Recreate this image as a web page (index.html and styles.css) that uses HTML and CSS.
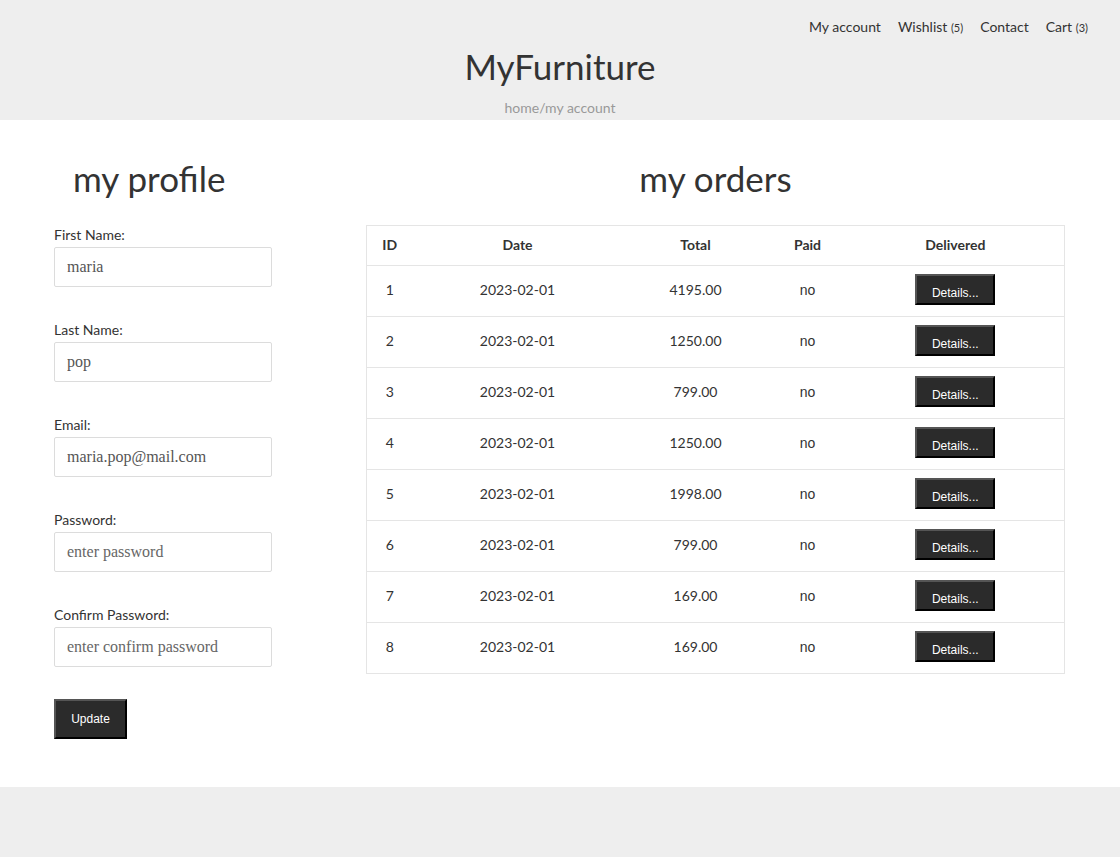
FILE: index.html
```html
<!DOCTYPE html>
<html>
<head>
<meta charset="utf-8">
<title>MyFurniture - my account</title>
<link rel="stylesheet" href="styles.css">
</head>
<body>
<header class="site-header">
  <nav class="top-nav">
    <a href="#">My account</a>
    <a href="#">Wishlist <small>(5)</small></a>
    <a href="#">Contact</a>
    <a href="#">Cart <small>(3)</small></a>
  </nav>
  <h1 class="brand">MyFurniture</h1>
  <div class="breadcrumb">home/my account</div>
</header>
<main class="content">
  <section class="profile">
    <h2 class="profile-title">my profile</h2>
    <form class="profile-form">
      <div class="field">
        <label>First Name:</label>
        <input type="text" value="maria">
      </div>
      <div class="field">
        <label>Last Name:</label>
        <input type="text" value="pop">
      </div>
      <div class="field">
        <label>Email:</label>
        <input type="text" value="maria.pop@mail.com">
      </div>
      <div class="field">
        <label>Password:</label>
        <input type="password" placeholder="enter password">
      </div>
      <div class="field">
        <label>Confirm Password:</label>
        <input type="password" placeholder="enter confirm password">
      </div>
      <button type="button" class="btn-dark btn-update">Update</button>
    </form>
  </section>
  <section class="orders">
    <h2 class="orders-title">my orders</h2>
    <table class="orders-table">
      <thead>
        <tr><th class="c-id">ID</th><th class="c-date">Date</th><th class="c-total">Total</th><th class="c-paid">Paid</th><th class="c-del">Delivered</th></tr>
      </thead>
      <tbody>
        <tr><td>1</td><td>2023-02-01</td><td>4195.00</td><td class="paid">no</td><td><button class="btn-dark btn-details">Details...</button></td></tr>
        <tr><td>2</td><td>2023-02-01</td><td>1250.00</td><td class="paid">no</td><td><button class="btn-dark btn-details">Details...</button></td></tr>
        <tr><td>3</td><td>2023-02-01</td><td>799.00</td><td class="paid">no</td><td><button class="btn-dark btn-details">Details...</button></td></tr>
        <tr><td>4</td><td>2023-02-01</td><td>1250.00</td><td class="paid">no</td><td><button class="btn-dark btn-details">Details...</button></td></tr>
        <tr><td>5</td><td>2023-02-01</td><td>1998.00</td><td class="paid">no</td><td><button class="btn-dark btn-details">Details...</button></td></tr>
        <tr><td>6</td><td>2023-02-01</td><td>799.00</td><td class="paid">no</td><td><button class="btn-dark btn-details">Details...</button></td></tr>
        <tr><td>7</td><td>2023-02-01</td><td>169.00</td><td class="paid">no</td><td><button class="btn-dark btn-details">Details...</button></td></tr>
        <tr><td>8</td><td>2023-02-01</td><td>169.00</td><td class="paid">no</td><td><button class="btn-dark btn-details">Details...</button></td></tr>
      </tbody>
    </table>
  </section>
</main>
<footer class="site-footer"></footer>
</body>
</html>
```
FILE: styles.css
```css
* { box-sizing: border-box; }
html, body { margin: 0; padding: 0; }
body {
  font-family: "Lato", "Open Sans", sans-serif;
  color: #333;
  background: #fff;
}
.site-header {
  background: #eeeeee;
  height: 120px;
  display: flex;
  flex-direction: column;
  align-items: center;
  padding-top: 17px;
}
.top-nav {
  align-self: flex-end;
  display: flex;
  gap: 17px;
  padding-right: 32px;
  font-size: 14px;
  line-height: 20px;
}
.top-nav a { color: #333; text-decoration: none; }
.top-nav small { font-size: 11px; }
.brand {
  margin: 5px 0 0;
  font-size: 35px;
  font-weight: 400;
  line-height: 46px;
  color: #333;
}
.breadcrumb {
  margin-top: 10px;
  font-size: 14px;
  line-height: 18px;
  color: #999;
}
.content {
  display: flex;
  padding: 0 55px 48px 54px;
}
.profile { width: 313px; }
.profile-title, .orders-title {
  margin: 38px 0 0;
  font-size: 35px;
  font-weight: 400;
  line-height: 40px;
  color: #333;
}
.profile-title { padding-left: 19px; }
.orders-title { text-align: center; }
.profile-form { margin-top: 27px; }
.field { margin-bottom: 33px; }
.field label {
  display: block;
  font-size: 14px;
  line-height: 20px;
  margin-bottom: 2px;
}
.field input {
  display: block;
  width: 218px;
  height: 40px;
  border: 1px solid #dcdcdc;
  border-radius: 2px;
  padding: 0 12px;
  font-family: "Liberation Serif", serif;
  font-size: 16px;
  color: #555;
  background: #fff;
}
.field input::placeholder { color: #666; }
.btn-dark {
  background: #2b2b2b;
  color: #fff;
  border: 2px outset #555;
  font-family: "Liberation Sans", Arial, sans-serif;
  font-size: 12px;
}
.btn-update {
  margin-top: -1px;
  width: 73px;
  height: 40px;
  padding: 0;
}
.orders { flex: 1; }
.orders-table {
  margin-top: 27px;
  width: 698px;
  border-collapse: collapse;
  border: 1px solid #e5e5e5;
  font-size: 14px;
  table-layout: fixed;
}
.orders-table th {
  font-weight: 700;
  height: 40px;
  padding: 0 0 3px;
  text-align: center;
  color: #333;
}
.orders-table td {
  height: 51px;
  padding: 0 0 3px;
  text-align: center;
  border-top: 1px solid #e5e5e5;
}
.orders-table td.paid { font-family: "Liberation Sans", Arial, sans-serif; }
.c-id { width: 46px; }
.c-date { width: 210px; }
.c-total { width: 146px; }
.c-paid { width: 78px; }
.c-del { width: 218px; }
.btn-details {
  width: 80px;
  height: 31px;
  padding: 6px 0 0;
}
.site-footer {
  background: #eeeeee;
  height: 71px;
}
```
